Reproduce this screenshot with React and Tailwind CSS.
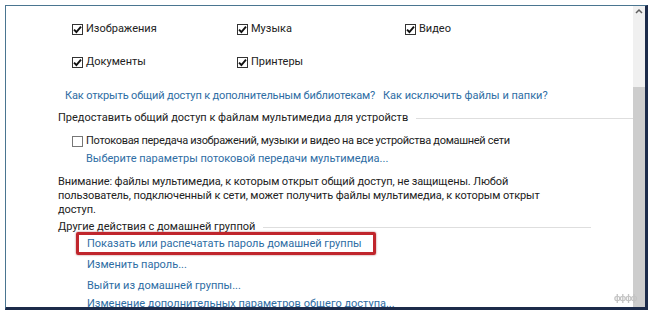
import React from "react";

const Check = ({ checked = true }) => (
  <span className="w-[11px] h-[11px] border border-[#333] bg-white flex items-center justify-center shrink-0">
    {checked && (
      <svg width="9" height="9" viewBox="0 0 9 9">
        <path d="M1 4.6 L3.4 7 L8 1.6" fill="none" stroke="#111" strokeWidth="1.9" />
      </svg>
    )}
  </span>
);

const CB = ({ label, w }) => (
  <div className={`flex items-center gap-[3px] ${w}`}>
    <Check />
    <span>{label}</span>
  </div>
);

export default function App() {
  return (
    <div
      className="w-[653px] h-[315px] bg-white overflow-hidden pt-[5px] pl-[5px] text-[11px] text-[#222]"
      style={{ fontFamily: 'Roboto, "Noto Sans", sans-serif' }}
    >
      <div className="w-[643px] h-[305px] flex border-l border-t border-r-[3px] border-b-[3px] border-l-[#4a7590] border-t-[#4a7590] border-r-[#1c2b4a] border-b-[#1c2b4a] relative">
        <div className="w-[627px] overflow-hidden relative leading-[16px]">
          <div className="-mt-[14px] h-[14px] pl-[59px] whitespace-nowrap">
            Библиотеки и устройства, к которым предоставлен общий доступ
          </div>
          <div className="mt-[15px] h-[16px] pl-[66px] flex">
            <CB label="Изображения" w="w-[165px]" />
            <CB label="Музыка" w="w-[168px]" />
            <CB label="Видео" w="" />
          </div>
          <div className="mt-[17px] h-[16px] pl-[66px] flex">
            <CB label="Документы" w="w-[165px]" />
            <CB label="Принтеры" w="" />
          </div>
          <div className="mt-[18px] h-[16px] pl-[59px] flex text-[#2e6da4] whitespace-nowrap">
            <span className="w-[318px] tracking-[-0.15px]">Как открыть общий доступ к дополнительным библиотекам?</span>
            <span>Как исключить файлы и папки?</span>
          </div>
          <div className="mt-[6px] h-[16px] pl-[52px] flex items-center whitespace-nowrap">
            <span>Предоставить общий доступ к файлам мультимедиа для устройств</span>
            <span className="ml-[8px] w-[258px] h-px bg-[#dedede]" />
          </div>
          <div className="mt-[7px] h-[16px] pl-[66px] flex items-center gap-[3px] whitespace-nowrap">
            <span className="w-[11px] h-[11px] border border-[#777] bg-white shrink-0" />
            <span className="tracking-[-0.3px]">Потоковая передача изображений, музыки и видео на все устройства домашней сети</span>
          </div>
          <div className="mt-[2px] h-[16px] pl-[80px] text-[#2e6da4] whitespace-nowrap">
            Выберите параметры потоковой передачи мультимедиа...
          </div>
          <div className="mt-[8px] pl-[52px] leading-[14px] whitespace-nowrap tracking-[-0.1px]">
            <div>Внимание: файлы мультимедиа, к которым открыт общий доступ, не защищены. Любой</div>
            <div>пользователь, подключенный к сети, может получить файлы мультимедиа, к которым открыт</div>
            <div>доступ.</div>
          </div>
          <div className="mt-[2px] h-[16px] pl-[52px] flex items-center whitespace-nowrap">
            <span>Другие действия с домашней группой</span>
            <span className="ml-[8px] w-[328px] h-px bg-[#dedede]" />
          </div>
          <div className="mt-[1px] h-[16px] pl-[81px] text-[#2e6da4] whitespace-nowrap relative">
            Показать или распечатать пароль домашней группы
            <div className="absolute left-[70px] top-[-4px] w-[300px] h-[23px] border-[3px] border-[#c0262c] rounded-[2px] shadow-[0_0_2px_rgba(120,0,0,0.6)]" />
          </div>
          <div className="mt-[5px] h-[16px] pl-[81px] text-[#2e6da4] whitespace-nowrap">
            Изменить пароль...
          </div>
          <div className="mt-[5px] h-[16px] pl-[81px] text-[#2e6da4] whitespace-nowrap">
            Выйти из домашней группы...
          </div>
          <div className="mt-[2px] h-[16px] pl-[81px] text-[#2e6da4] underline whitespace-nowrap">
            Изменение дополнительных параметров общего доступа...
          </div>
        </div>
        <div className="w-[12px] bg-[#f0f0f0] flex flex-col">
          <div className="h-[10px] flex items-center justify-center">
            <svg width="8" height="6" viewBox="0 0 8 6">
              <path d="M1 5 L4 2 L7 5" fill="none" stroke="#606060" strokeWidth="1.5" />
            </svg>
          </div>
          <div className="mt-[71px] flex-1 bg-[#cdcdcd]" />
        </div>
        <div className="absolute left-[608px] top-[286px] text-[9px] font-bold text-[#c4c4c4] tracking-[-1px] blur-[0.5px]">
          фффф
        </div>
      </div>
    </div>
  );
}
